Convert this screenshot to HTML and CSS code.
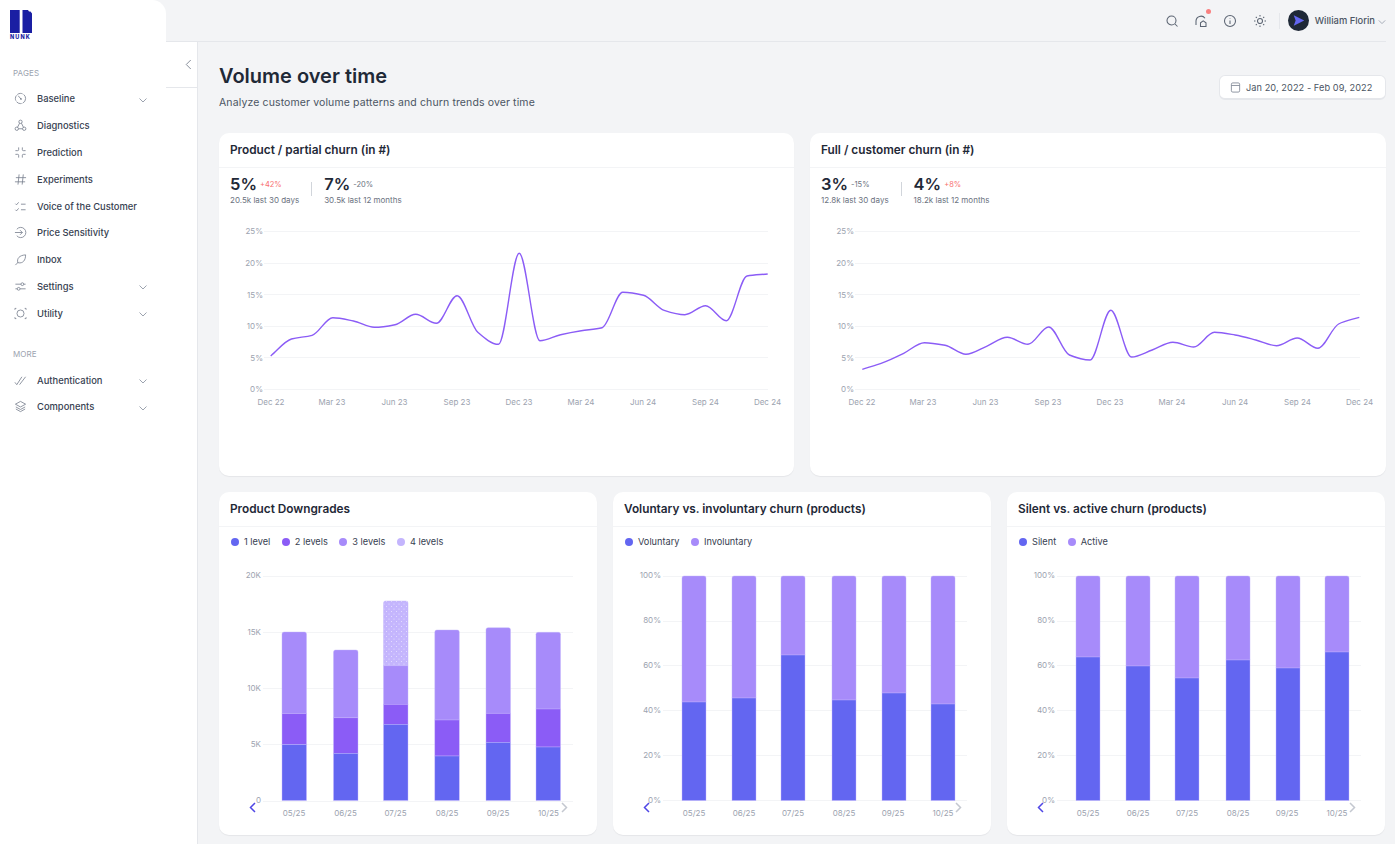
FILE: index.html
```html
<!DOCTYPE html>
<html lang="en">
<head>
<meta charset="utf-8">
<title>Volume over time</title>
<link rel="stylesheet" href="styles.css">
</head>
<body>
<div class="app">
  <aside class="sidebar">
    <div class="side-top">
      <div class="brand">
        <svg class="logo" viewBox="0 0 22 23"><path d="M0 0h9.7v23H0z"/><path d="M12.500 0h5.500l1 1.500h1.500l1.500 2V23h-9.500z"/></svg>
        <span class="logo-text">NUNK</span>
      </div>
      <div class="side-top-rest"></div>
    </div>
    <div class="side-body">
      <nav class="nav">
        <div class="nav-label">PAGES</div>
        <a class="nav-item"><svg class="nav-icon" viewBox="0 0 14 14"><circle cx="7" cy="7" r="5.500" stroke-dasharray="6 1.200"/><path d="M4.500 4l3.200 3.800"/><circle cx="7.500" cy="7.500" r=".6"/></svg><span class="nav-text">Baseline</span><svg class="chev" viewBox="0 0 10 10"><path d="M1.500 3.500L5 7l3.500-3.500"/></svg></a>
        <a class="nav-item"><svg class="nav-icon" viewBox="0 0 14 14"><circle cx="7" cy="3" r="1.800"/><circle cx="3" cy="10.500" r="1.800"/><circle cx="11" cy="10.500" r="1.800"/><path d="M6 4.500L3.800 9M8 4.500l2.200 4.500M4.800 10.500h4.400"/></svg><span class="nav-text">Diagnostics</span></a>
        <a class="nav-item"><svg class="nav-icon" viewBox="0 0 14 14"><path d="M5 1.500V4a1 1 0 0 1-1 1H1.500M9 1.500V4a1 1 0 0 0 1 1h2.500M5 12.500V10a1 1 0 0 0-1-1H1.500M9 12.500V10a1 1 0 0 1 1-1h2.500"/></svg><span class="nav-text">Prediction</span></a>
        <a class="nav-item"><svg class="nav-icon" viewBox="0 0 14 14"><path d="M2 5h11M1 9.500h11M5.500 1.500l-1.200 11M10 1.500l-1.200 11"/></svg><span class="nav-text">Experiments</span></a>
        <a class="nav-item"><svg class="nav-icon" viewBox="0 0 14 14"><path d="M1.500 4l1.200 1.200L5 2.500M1.500 10.500l1.200 1.200L5 9M7.500 4.500h5M7.500 10.500h5"/></svg><span class="nav-text">Voice of the Customer</span></a>
        <a class="nav-item"><svg class="nav-icon" viewBox="0 0 14 14"><path d="M3 3.500a5.500 5.500 0 1 1 0 7"/><path d="M1 7h8M6.500 4.500L9 7l-2.500 2.500"/></svg><span class="nav-text">Price Sensitivity</span></a>
        <a class="nav-item"><svg class="nav-icon" viewBox="0 0 14 14"><path d="M1.500 13L5 9.500M4 10.500C3 6 5.500 2.500 12.500 2C12.500 8 9.500 11.500 4.500 10.500"/></svg><span class="nav-text">Inbox</span></a>
        <a class="nav-item"><svg class="nav-icon" viewBox="0 0 14 14"><path d="M1.500 4.500h6M10.500 4.500h2M1.500 9.500h2M6.500 9.500h6"/><circle cx="9" cy="4.500" r="1.500"/><circle cx="5" cy="9.500" r="1.500"/></svg><span class="nav-text">Settings</span><svg class="chev" viewBox="0 0 10 10"><path d="M1.500 3.500L5 7l3.500-3.500"/></svg></a>
        <a class="nav-item"><svg class="nav-icon" viewBox="0 0 14 14"><circle cx="7" cy="7" r="3.800"/><path d="M1 3V1.500h1.500M11.500 1.500H13V3M1 11v1.500h1.500M11.500 12.500H13V11"/></svg><span class="nav-text">Utility</span><svg class="chev" viewBox="0 0 10 10"><path d="M1.500 3.500L5 7l3.500-3.500"/></svg></a>
        <div class="nav-label nav-label-more">MORE</div>
        <a class="nav-item"><svg class="nav-icon" viewBox="0 0 14 14"><path d="M1 9l2 2.500L8.500 3M6 11.500L12.500 3"/></svg><span class="nav-text">Authentication</span><svg class="chev" viewBox="0 0 10 10"><path d="M1.500 3.500L5 7l3.500-3.500"/></svg></a>
        <a class="nav-item"><svg class="nav-icon" viewBox="0 0 14 14"><path d="M7 1.500l5.500 3L7 7.500l-5.500-3zM2 7.500L7 10.200l5-2.700M2 9.700l5 2.800 5-2.800"/></svg><span class="nav-text">Components</span><svg class="chev" viewBox="0 0 10 10"><path d="M1.500 3.500L5 7l3.500-3.500"/></svg></a>
      </nav>
      <div class="rail">
        <div class="toggle"><svg viewBox="0 0 10 14"><path d="M7.500 2L2.500 7l5 5"/></svg></div>
      </div>
    </div>
  </aside>

  <div class="content">
    <header class="topbar">
      <div class="top-icons">
        <svg class="top-icon" viewBox="0 0 14 14"><circle cx="6.500" cy="6.500" r="4.500"/><path d="M10 10l2.500 2.500"/></svg>
        <span class="bell">
          <svg class="top-icon" viewBox="0 0 14 14"><path d="M2 11V7a5 5 0 0 1 9-2.800"/><path d="M6.500 12.500V8.800l2.700-2 2.800 2v3.700z"/></svg>
          <i class="badge"></i>
        </span>
        <svg class="top-icon" viewBox="0 0 14 14"><circle cx="7" cy="7" r="5.500"/><path d="M7 6.500V10M7 4v.6"/></svg>
        <svg class="top-icon" viewBox="0 0 14 14"><circle cx="7" cy="7" r="2.500"/><path d="M7 1v1.500M7 11.500V13M1 7h1.500M11.500 7H13M2.800 2.800l1 1M10.200 10.200l1 1M2.800 11.200l1-1M10.200 3.800l1-1"/></svg>
      </div>
      <span class="top-sep"></span>
      <span class="avatar"><svg viewBox="0 0 22 22"><path d="M6 5.500L17 11 6 16.500l2-5.500z"/></svg></span>
      <span class="user">William Florin</span>
      <svg class="user-chev" viewBox="0 0 10 10"><path d="M1 3L5 7l4-4"/></svg>
    </header>

    <main class="page">
      <div class="page-head">
        <div>
          <h1 class="page-title">Volume over time</h1>
          <p class="page-sub">Analyze customer volume patterns and churn trends over time</p>
        </div>
        <button class="date-btn"><svg viewBox="0 0 12 12"><rect x="1.500" y="1" width="9" height="10" rx="1.500"/><path d="M1.500 3.800h9"/></svg>Jan 20, 2022 - Feb 09, 2022</button>
      </div>

      <section class="row row-two">
        <article class="card">
          <h2 class="card-title">Product / partial churn (in #)</h2>
          <div class="stats">
            <div class="stat">
              <div class="stat-top"><span class="stat-value">5%</span><span class="delta up">+42%</span></div>
              <div class="stat-sub">20.5k last 30 days</div>
            </div>
            <span class="stat-sep"></span>
            <div class="stat">
              <div class="stat-top"><span class="stat-value">7%</span><span class="delta">-20%</span></div>
              <div class="stat-sub">30.5k last 12 months</div>
            </div>
          </div>
          <svg class="line-chart" viewBox="219 220 575 200">
            <g class="grid">
              <path d="M264 231.500H768M264 263.500H768M264 294.500H768M264 326.500H768M264 357.500H768M264 389.500H768"/>
            </g>
            <g class="tick tick-y">
              <text x="263" y="234">25%</text><text x="263" y="266">20%</text><text x="263" y="297.500">15%</text><text x="263" y="329">10%</text><text x="263" y="360.500">5%</text><text x="263" y="392">0%</text>
            </g>
            <g class="tick tick-x">
              <text x="271" y="405">Dec 22</text><text x="332" y="405">Mar 23</text><text x="394.500" y="405">Jun 23</text><text x="457" y="405">Sep 23</text><text x="519" y="405">Dec 23</text><text x="581" y="405">Mar 24</text><text x="643" y="405">Jun 24</text><text x="705.500" y="405">Sep 24</text><text x="767.500" y="405">Dec 24</text>
            </g>
            <path class="trend" d="M270.700 356C277.600 350.300 284.500 341 291.400 339C298.300 337 305.200 337.300 312.100 335.300C319 333.300 325.900 317.700 332.800 317.700C339.700 317.700 346.600 319.600 353.500 321C360.400 322.400 367.400 327.300 374.300 327.300C381.200 327.300 388.100 326.100 395 324.700C401.900 323.300 408.800 314.300 415.700 314.300C422.600 314.300 429.500 323.300 436.400 323.300C443.300 323.300 450.200 295.700 457.100 295.700C464 295.700 470.900 326.300 477.800 332.300C484.700 338.300 491.600 344.300 498.500 344.300C505.400 344.300 512.300 253.300 519.200 253.300C526.100 253.300 533 340.700 539.900 340.700C546.800 340.700 553.700 336.300 560.600 334.700C567.500 333.100 574.400 331.800 581.300 330.700C588.200 329.600 595.200 329.500 602.100 327.700C609 325.900 615.900 292.300 622.800 292.300C629.700 292.300 636.600 293.600 643.500 295.300C650.400 297 657.300 308 664.200 310.300C671.100 312.600 678 314.700 684.900 314.700C691.800 314.700 698.700 305.700 705.600 305.700C712.500 305.700 719.400 320.700 726.300 320.700C733.200 320.700 740.100 277.300 747 276C753.900 274.700 760.800 274.700 767.700 274"/>
          </svg>
        </article>

        <article class="card">
          <h2 class="card-title">Full / customer churn (in #)</h2>
          <div class="stats">
            <div class="stat">
              <div class="stat-top"><span class="stat-value">3%</span><span class="delta">-15%</span></div>
              <div class="stat-sub">12.8k last 30 days</div>
            </div>
            <span class="stat-sep"></span>
            <div class="stat">
              <div class="stat-top"><span class="stat-value">4%</span><span class="delta up">+8%</span></div>
              <div class="stat-sub">18.2k last 12 months</div>
            </div>
          </div>
          <svg class="line-chart" viewBox="810 220 576 200">
            <g class="grid">
              <path d="M855 231.500H1360M855 263.500H1360M855 294.500H1360M855 326.500H1360M855 357.500H1360M855 389.500H1360"/>
            </g>
            <g class="tick tick-y">
              <text x="854" y="234">25%</text><text x="854" y="266">20%</text><text x="854" y="297.500">15%</text><text x="854" y="329">10%</text><text x="854" y="360.500">5%</text><text x="854" y="392">0%</text>
            </g>
            <g class="tick tick-x">
              <text x="862" y="405">Dec 22</text><text x="923" y="405">Mar 23</text><text x="985.500" y="405">Jun 23</text><text x="1048" y="405">Sep 23</text><text x="1110" y="405">Dec 23</text><text x="1172" y="405">Mar 24</text><text x="1235" y="405">Jun 24</text><text x="1297.500" y="405">Sep 24</text><text x="1359.500" y="405">Dec 24</text>
            </g>
            <path class="trend" d="M862.300 369.300C869.200 367.100 876.100 365.300 883 362.700C889.900 360.100 896.800 356.600 903.700 353.300C910.600 350 917.500 342.700 924.400 342.700C931.300 342.700 938.200 344 945.100 345.300C952 346.600 959 354.300 965.900 354.300C972.800 354.300 979.700 349.100 986.600 346.300C993.500 343.500 1000.400 337.300 1007.300 337.300C1014.200 337.300 1021.100 344.300 1028 344.300C1034.900 344.300 1041.800 327 1048.700 327C1055.600 327 1062.500 352.200 1069.400 355C1076.300 357.800 1083.200 360 1090.100 360C1097 360 1103.900 310.300 1110.800 310.300C1117.700 310.300 1124.600 357 1131.500 357C1138.400 357 1145.300 352.400 1152.200 350C1159.100 347.600 1166 342.300 1172.900 342.300C1179.800 342.300 1186.800 347 1193.700 347C1200.600 347 1207.500 332.300 1214.400 332.300C1221.300 332.300 1228.200 333.800 1235.100 335C1242 336.200 1248.900 338.200 1255.800 340C1262.700 341.800 1269.600 345.700 1276.500 345.700C1283.400 345.700 1290.300 338 1297.200 338C1304.100 338 1311 348.300 1317.900 348.300C1324.800 348.300 1331.700 327.500 1338.600 324C1345.500 320.500 1352.400 319.500 1359.300 317.300"/>
          </svg>
        </article>
      </section>

      <section class="row row-three">
        <article class="card">
          <h2 class="card-title">Product Downgrades</h2>
          <div class="legend">
            <span class="legend-item"><i class="dot c1"></i>1 level</span>
            <span class="legend-item"><i class="dot c2"></i>2 levels</span>
            <span class="legend-item"><i class="dot c3"></i>3 levels</span>
            <span class="legend-item"><i class="dot c4"></i>4 levels</span>
          </div>
          <svg class="bar-chart" viewBox="219 550 378 285">
            <defs>
              <pattern id="dots" width="5" height="5" patternUnits="userSpaceOnUse"><rect width="5" height="5" fill="#c4b5fd"/><circle cx="1.500" cy="1.500" r=".5" fill="#ede9fe"/><circle cx="4" cy="4" r=".5" fill="#ede9fe"/></pattern>
            </defs>
            <g class="grid"><path d="M263 576.500H573M263 632.500H573M263 688.500H573M263 744.500H573M263 801.500H573"/></g>
            <g class="tick tick-y">
              <text x="261" y="578">20K</text><text x="261" y="635">15K</text><text x="261" y="691">10K</text><text x="261" y="747">5K</text><text x="261" y="803">0</text>
            </g>
            <g class="tick tick-x">
              <text x="294" y="816">05/25</text><text x="345.500" y="816">06/25</text><text x="395.500" y="816">07/25</text><text x="447" y="816">08/25</text><text x="498" y="816">09/25</text><text x="548.500" y="816">10/25</text>
            </g>
            <g class="bars">
              <path class="c3" d="M282 634a2 2 0 0 1 2-2h20.500a2 2 0 0 1 2 2v79.500H282z"/><rect class="c2" x="282" y="713.500" width="24.500" height="31"/><rect class="c1" x="282" y="744.500" width="24.500" height="56"/>
              <path class="c3" d="M333.500 652a2 2 0 0 1 2-2H356a2 2 0 0 1 2 2v65.800h-24.500z"/><rect class="c2" x="333.500" y="717.800" width="24.500" height="35.500"/><rect class="c1" x="333.500" y="753.300" width="24.500" height="47.200"/>
              <path fill="url(#dots)" d="M383.500 603a2 2 0 0 1 2-2H406a2 2 0 0 1 2 2v62.800h-24.500z"/><rect class="c3" x="383.500" y="665.800" width="24.500" height="38.500"/><rect class="c2" x="383.500" y="704.300" width="24.500" height="20"/><rect class="c1" x="383.500" y="724.300" width="24.500" height="76.200"/>
              <path class="c3" d="M434.800 632a2 2 0 0 1 2-2h20.500a2 2 0 0 1 2 2v88h-24.500z"/><rect class="c2" x="434.800" y="720" width="24.500" height="36"/><rect class="c1" x="434.800" y="756" width="24.500" height="44.500"/>
              <path class="c3" d="M486 629.700a2 2 0 0 1 2-2h20.500a2 2 0 0 1 2 2v83.600H486z"/><rect class="c2" x="486" y="713.300" width="24.500" height="29"/><rect class="c1" x="486" y="742.300" width="24.500" height="58.200"/>
              <path class="c3" d="M536 634.300a2 2 0 0 1 2-2h20.500a2 2 0 0 1 2 2V709H536z"/><rect class="c2" x="536" y="709" width="24.500" height="38"/><rect class="c1" x="536" y="747" width="24.500" height="53.500"/>
            </g>
            <path class="arrow arrow-on" d="M255 803l-4.500 4.500 4.500 4.500"/>
            <path class="arrow" d="M562 803l4.500 4.500-4.500 4.500"/>
          </svg>
        </article>

        <article class="card">
          <h2 class="card-title">Voluntary vs. involuntary churn (products)</h2>
          <div class="legend">
            <span class="legend-item"><i class="dot c1"></i>Voluntary</span>
            <span class="legend-item"><i class="dot c3"></i>Involuntary</span>
          </div>
          <svg class="bar-chart" viewBox="613 550 378 285">
            <g class="grid"><path d="M663 576.500H967M663 621.500H967M663 665.500H967M663 710.500H967M663 755.500H967M663 800.500H967"/></g>
            <g class="tick tick-y">
              <text x="661" y="578">100%</text><text x="661" y="623">80%</text><text x="661" y="668">60%</text><text x="661" y="713">40%</text><text x="661" y="758">20%</text><text x="661" y="803">0%</text>
            </g>
            <g class="tick tick-x">
              <text x="694" y="816">05/25</text><text x="744" y="816">06/25</text><text x="793" y="816">07/25</text><text x="844" y="816">08/25</text><text x="893" y="816">09/25</text><text x="943" y="816">10/25</text>
            </g>
            <g class="bars">
              <path class="c3" d="M682 578a2 2 0 0 1 2-2h20a2 2 0 0 1 2 2v124h-24z"/><rect class="c1" x="682" y="702" width="24" height="98.500"/>
              <path class="c3" d="M732 578a2 2 0 0 1 2-2h20a2 2 0 0 1 2 2v120h-24z"/><rect class="c1" x="732" y="698" width="24" height="102.500"/>
              <path class="c3" d="M781 578a2 2 0 0 1 2-2h20a2 2 0 0 1 2 2v77h-24z"/><rect class="c1" x="781" y="655" width="24" height="145.500"/>
              <path class="c3" d="M832 578a2 2 0 0 1 2-2h20a2 2 0 0 1 2 2v122h-24z"/><rect class="c1" x="832" y="700" width="24" height="100.500"/>
              <path class="c3" d="M882 578a2 2 0 0 1 2-2h20a2 2 0 0 1 2 2v115h-24z"/><rect class="c1" x="882" y="693" width="24" height="107.500"/>
              <path class="c3" d="M931 578a2 2 0 0 1 2-2h20a2 2 0 0 1 2 2v126h-24z"/><rect class="c1" x="931" y="704" width="24" height="96.500"/>
            </g>
            <path class="arrow arrow-on" d="M649 803l-4.500 4.500 4.500 4.500"/>
            <path class="arrow" d="M956 803l4.500 4.500-4.500 4.500"/>
          </svg>
        </article>

        <article class="card">
          <h2 class="card-title">Silent vs. active churn (products)</h2>
          <div class="legend">
            <span class="legend-item"><i class="dot c1"></i>Silent</span>
            <span class="legend-item"><i class="dot c3"></i>Active</span>
          </div>
          <svg class="bar-chart" viewBox="1007 550 378 285">
            <g class="grid"><path d="M1057 576.500H1361M1057 621.500H1361M1057 665.500H1361M1057 710.500H1361M1057 755.500H1361M1057 800.500H1361"/></g>
            <g class="tick tick-y">
              <text x="1055" y="578">100%</text><text x="1055" y="623">80%</text><text x="1055" y="668">60%</text><text x="1055" y="713">40%</text><text x="1055" y="758">20%</text><text x="1055" y="803">0%</text>
            </g>
            <g class="tick tick-x">
              <text x="1088" y="816">05/25</text><text x="1138" y="816">06/25</text><text x="1187" y="816">07/25</text><text x="1238" y="816">08/25</text><text x="1287" y="816">09/25</text><text x="1337" y="816">10/25</text>
            </g>
            <g class="bars">
              <path class="c3" d="M1076 578a2 2 0 0 1 2-2h20a2 2 0 0 1 2 2v79h-24z"/><rect class="c1" x="1076" y="657" width="24" height="143.500"/>
              <path class="c3" d="M1126 578a2 2 0 0 1 2-2h20a2 2 0 0 1 2 2v88h-24z"/><rect class="c1" x="1126" y="666" width="24" height="134.500"/>
              <path class="c3" d="M1175 578a2 2 0 0 1 2-2h20a2 2 0 0 1 2 2v100h-24z"/><rect class="c1" x="1175" y="678" width="24" height="122.500"/>
              <path class="c3" d="M1226 578a2 2 0 0 1 2-2h20a2 2 0 0 1 2 2v82h-24z"/><rect class="c1" x="1226" y="660" width="24" height="140.500"/>
              <path class="c3" d="M1276 578a2 2 0 0 1 2-2h20a2 2 0 0 1 2 2v90h-24z"/><rect class="c1" x="1276" y="668" width="24" height="132.500"/>
              <path class="c3" d="M1325 578a2 2 0 0 1 2-2h20a2 2 0 0 1 2 2v74h-24z"/><rect class="c1" x="1325" y="652" width="24" height="148.500"/>
            </g>
            <path class="arrow arrow-on" d="M1043 803l-4.500 4.500 4.500 4.500"/>
            <path class="arrow" d="M1350 803l4.500 4.500-4.500 4.500"/>
          </svg>
        </article>
      </section>
    </main>
  </div>
</div>
</body>
</html>
```
FILE: styles.css
```css
* { box-sizing: border-box; }
html, body { margin: 0; height: 100%; }
body {
  background: #f3f4f6;
  color: #1f2937;
  font-family: Inter, "Liberation Sans", sans-serif;
  overflow: hidden;
}
.app { display: flex; height: 844px; }

/* Sidebar */
.sidebar { width: 198px; flex: none; display: flex; flex-direction: column; }
.side-top { display: flex; height: 42px; flex: none; }
.brand {
  width: 166px;
  background: #fff;
  border-top-right-radius: 14px;
  padding: 10px 0 0 10px;
}
.logo { display: block; width: 22px; height: 23px; fill: #1a1fa3; }
.logo-text {
  display: block;
  margin-top: 1px;
  font-size: 5.5px;
  line-height: 7px;
  font-weight: 800;
  letter-spacing: 1.1px;
  color: #1a1fa3;
}
.side-top-rest { flex: 1; border-bottom: 1px solid #e5e7eb; }
.side-body {
  flex: 1;
  display: flex;
  background: #fff;
  border-right: 1px solid #e5e7eb;
}
.nav { width: 166px; flex: none; padding: 25px 0 0 13px; }
.nav-label {
  font-size: 8px;
  line-height: 12px;
  color: #9ca3af;
  letter-spacing: .1px;
  margin-bottom: 6.5px;
}
.nav-label-more { margin-top: 21.5px; }
.nav-item {
  display: flex;
  align-items: center;
  height: 26.8px;
  font-size: 9.4px;
  font-weight: 450;
  color: #374151;
}
.nav-icon {
  width: 13px;
  height: 13px;
  margin-left: 1px;
  flex: none;
  fill: none;
  stroke: #7b8290;
  stroke-width: .9;
}
.nav-text { margin-left: 10px; flex: 1; }
.chev {
  width: 10px;
  height: 10px;
  flex: none;
  fill: none;
  stroke: #9ca3af;
  stroke-width: 1;
  margin-right: 18px;
  margin-top: 2px;
}
.rail { flex: 1; }
.toggle {
  height: 46px;
  border-bottom: 1px solid #e5e7eb;
  display: flex;
  align-items: center;
  padding-left: 17.5px;
}
.toggle svg { width: 9px; height: 13px; fill: none; stroke: #7b8290; stroke-width: 1; }

/* Top bar */
.content { flex: 1; min-width: 0; display: flex; flex-direction: column; }
.topbar {
  height: 42px;
  flex: none;
  margin-right: 9px;
  border-bottom: 1px solid #e5e7eb;
  display: flex;
  align-items: center;
  justify-content: flex-end;
}
.top-icons { display: flex; align-items: center; gap: 15.3px; }
.top-icon {
  display: block;
  width: 14px;
  height: 14px;
  fill: none;
  stroke: #5b6472;
  stroke-width: 1.05;
}
.bell { position: relative; display: block; }
.badge {
  position: absolute;
  top: -4.5px;
  left: 12px;
  width: 5px;
  height: 5px;
  border-radius: 50%;
  background: #f98080;
}
.top-sep { width: 1px; height: 16px; background: #e5e7eb; margin: 0 8px 0 12px; }
.avatar {
  width: 21px;
  height: 21px;
  border-radius: 50%;
  background: #1f2937;
  display: block;
}
.avatar svg { display: block; width: 21px; height: 21px; fill: #6366f1; }
.user { font-size: 9.4px; font-weight: 450; color: #4b5563; margin-left: 6px; }
.user-chev {
  width: 8px;
  height: 8px;
  margin: 2px 0 0 3px;
  fill: none;
  stroke: #9ca3af;
  stroke-width: 1.1;
}

/* Page */
.page { flex: 1; padding: 0 9px 0 21px; min-height: 0; }
.page-head { display: flex; justify-content: space-between; align-items: flex-start; height: 91px; }
.page-title { margin: 21px 0 0; font-size: 20px; line-height: 26px; font-weight: 600; color: #1f2937; }
.page-sub { margin: 7px 0 0; font-size: 10.5px; line-height: 13px; color: #4b5563; letter-spacing: .12px; }
.date-btn {
  margin-top: 33px;
  display: flex;
  align-items: center;
  gap: 5px;
  width: 167px;
  height: 25px;
  padding: 0 0 0 10px;
  background: #fff;
  border: 1px solid #e5e7eb;
  border-bottom-width: 2px;
  border-radius: 6px;
  font: 400 9.2px Inter, "Liberation Sans", sans-serif;
  color: #4b5563;
  letter-spacing: .07px;
}
.date-btn svg { width: 11px; height: 11px; fill: none; stroke: #7b8290; stroke-width: .9; }

.row { display: grid; gap: 16px; }
.row-two { grid-template-columns: 575px 576px; margin-bottom: 16px; }
.row-three { grid-template-columns: repeat(3, 378px); }
.card {
  height: 343px;
  background: #fff;
  border-radius: 10px;
  box-shadow: 0 1px 1px rgba(17, 24, 39, .06);
  overflow: hidden;
}
.card-title {
  margin: 0;
  height: 35px;
  padding: 0 11px;
  border-bottom: 1px solid #f3f4f6;
  font-size: 11.8px;
  font-weight: 600;
  line-height: 35px;
  color: #1f2937;
}
.stats { display: flex; align-items: flex-start; height: 52px; padding: 6px 11px 0; }
.stat-top { display: flex; align-items: flex-start; gap: 3px; height: 20px; }
.stat-value { font-size: 16.5px; line-height: 20px; font-weight: 600; color: #1f2937; }
.delta { font-size: 7.5px; line-height: 9px; margin-top: 6px; color: #6b7280; }
.delta.up { color: #f87171; }
.stat-sub { font-size: 8px; line-height: 11px; margin-top: 1px; color: #6b7280; }
.stat-sep { width: 1px; height: 14px; background: #d1d5db; margin: 8px 12px 0; }

.line-chart { display: block; width: 100%; height: 200px; }
.bar-chart { display: block; width: 100%; height: 285px; }
.grid path { fill: none; stroke: #f3f4f6; stroke-width: 1; }
.tick text { font-size: 8px; fill: #9ca3af; font-family: Inter, "Liberation Sans", sans-serif; }
.tick-y text { text-anchor: end; }
.tick-x text { text-anchor: middle; }
.trend { fill: none; stroke: #8b5cf6; stroke-width: 1.4; }
.arrow { fill: none; stroke: #c4c8d0; stroke-width: 1.5; }
.arrow-on { stroke: #4f46e5; }

.legend { display: flex; gap: 10.5px; height: 23px; padding: 7px 11px 0; }
.legend-item { display: flex; align-items: center; gap: 5px; font-size: 9.2px; line-height: 15px; height: 15px; color: #374151; }
.dot { width: 8px; height: 8px; border-radius: 50%; margin-left: 1px; }
.dot.c1 { background: #6366f1; }
.dot.c2 { background: #8b5cf6; }
.dot.c3 { background: #a78bfa; }
.dot.c4 { background: #c4b5fd; }
.bars path, .bars rect { stroke: rgba(196, 181, 253, .7); stroke-width: .6; }
.bars .c1 { fill: #6366f1; }
.bars .c2 { fill: #8b5cf6; }
.bars .c3 { fill: #a78bfa; }
```
